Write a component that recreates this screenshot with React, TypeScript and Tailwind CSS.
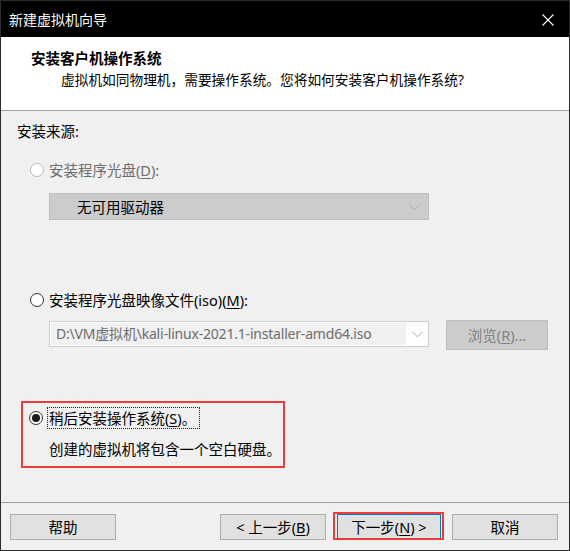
import React from "react";

const Chevron = ({ color = "#9a9a9a" }: { color?: string }) => (
  <svg width="11" height="7" viewBox="0 0 11 7" fill="none">
    <path d="M0.5 0.8 L5.5 5.8 L10.5 0.8" stroke={color} strokeWidth="1" />
  </svg>
);

const Radio = ({ state }: { state: "disabled" | "off" | "on" }) => {
  if (state === "disabled")
    return <div className="w-[14px] h-[14px] rounded-full border border-[#bcbcbc] bg-white" />;
  if (state === "off")
    return <div className="w-[14px] h-[14px] rounded-full border border-[#333333] bg-white" />;
  return (
    <div className="w-[14px] h-[14px] rounded-full border border-[#333333] bg-white flex items-center justify-center">
      <div className="w-[8px] h-[8px] rounded-full bg-[#1a1a1a]" />
    </div>
  );
};

export default function App() {
  return (
    <div className="w-[570px] h-[551px] border border-[#2c2c2c] flex flex-col font-['Noto_Sans','Noto_Sans_CJK_SC',sans-serif] text-[14.5px] leading-[20px] text-black overflow-hidden">
      {/* title bar */}
      <div className="h-[36px] bg-black flex items-center pl-[8px] pr-[15px] shrink-0">
        <span className="text-white text-[14px] leading-[20px] font-['Noto_Sans_CJK_SC',sans-serif]">新建虚拟机向导</span>
        <div className="ml-auto pt-[1px]">
          <svg width="12" height="12" viewBox="0 0 12 12">
            <path d="M0.5 0.5 L11.5 11.5 M11.5 0.5 L0.5 11.5" stroke="#ffffff" strokeWidth="1.1" />
          </svg>
        </div>
      </div>
      {/* header */}
      <div className="h-[74px] bg-white border-b border-[#a0a0a0] shrink-0 pl-[30px] pt-[11px]">
        <div className="font-bold text-[14.5px] leading-[20px] font-['Noto_Sans_CJK_SC',sans-serif]">安装客户机操作系统</div>
        <div className="mt-[2px] ml-[30px] text-[13.7px] leading-[20px]">虚拟机如同物理机，需要操作系统。您将如何安装客户机操作系统?</div>
      </div>
      {/* body */}
      <div className="h-[391px] bg-[#f0f0f0] shrink-0 pl-[16px] pt-[10px] flex flex-col">
        <div>安装来源:</div>
        <div className="mt-[19px] ml-[13px] flex items-center gap-[5px] text-[#6d6d6d]">
          <Radio state="disabled" />
          <span>
            安装程序光盘(<span className="underline underline-offset-2">D</span>):
          </span>
        </div>
        <div className="mt-[13px] ml-[32px] w-[380px] h-[27px] bg-[#cccccc] border border-[#bfbfbf] flex items-center pl-[27px] pr-[8px]">
          <span>无可用驱动器</span>
          <div className="ml-auto pt-[2px]">
            <Chevron color="#a8a8a8" />
          </div>
        </div>
        <div className="mt-[70px] ml-[13px] flex items-center gap-[5px]">
          <Radio state="off" />
          <span>
            安装程序光盘映像文件(iso)(<span className="underline underline-offset-2">M</span>):
          </span>
        </div>
        <div className="mt-[10px] ml-[32px] flex items-start">
          <div className="mt-[1px] w-[380px] h-[26px] bg-white border border-[#cccccc] flex items-stretch">
            <div className="w-[355px] bg-[#f0f0f0] text-[#6d6d6d] text-[14px] pl-[5px] flex items-center m-[1px] mr-0 tracking-[-0.2px]">
              D:\VM虚拟机\kali-linux-2021.1-installer-amd64.iso
            </div>
            <div className="flex-1 flex items-center justify-center pt-[1px]">
              <Chevron color="#a8a8a8" />
            </div>
          </div>
          <div className="ml-[17px] w-[102px] h-[30px] bg-[#cccccc] border border-[#bfbfbf] flex items-center justify-center text-[#838383]">
            <span>
              浏览(<span className="underline underline-offset-2">R</span>)...
            </span>
          </div>
        </div>
        <div className="mt-[51px] ml-[4px] w-[264px] h-[67px] border-2 border-[#ee3b3b] pl-[6px] pt-[4px]">
          <div className="flex items-center gap-[4px]">
            <Radio state="on" />
            <div className="border border-dotted border-[#222] h-[22px] flex items-center pr-[3px]">
              <span className="ml-[1px]">
                稍后安装操作系统(<span className="underline underline-offset-2">S</span>)。
              </span>
            </div>
          </div>
          <div className="mt-[10px] ml-[20px]">创建的虚拟机将包含一个空白硬盘。</div>
        </div>
      </div>
      {/* footer */}
      <div className="h-[48px] bg-[#f0f0f0] border-t border-[#a0a0a0] shrink-0 pl-[9px] pt-[11px] flex items-start">
        <div className="w-[106px] h-[26px] bg-[#e1e1e1] border border-[#adadad] flex items-center justify-center">帮助</div>
        <div className="ml-[104px] w-[106px] h-[26px] bg-[#e1e1e1] border border-[#adadad] flex items-center justify-center">
          <span>
            &lt; 上一步(<span className="underline underline-offset-2">B</span>)
          </span>
        </div>
        <div className="relative ml-[11px]">
          <div className="w-[104px] h-[26px] bg-[#e1e1e1] border border-[#0078d7] flex items-center justify-center">
            <span>
              下一步(<span className="underline underline-offset-2">N</span>) &gt;
            </span>
          </div>
          <div className="absolute -left-[4px] -right-[3px] -top-[2px] bottom-0 border-2 border-[#ee3b3b]" />
        </div>
        <div className="ml-[11px] w-[106px] h-[26px] bg-[#e1e1e1] border border-[#adadad] flex items-center justify-center">取消</div>
      </div>
    </div>
  );
}
